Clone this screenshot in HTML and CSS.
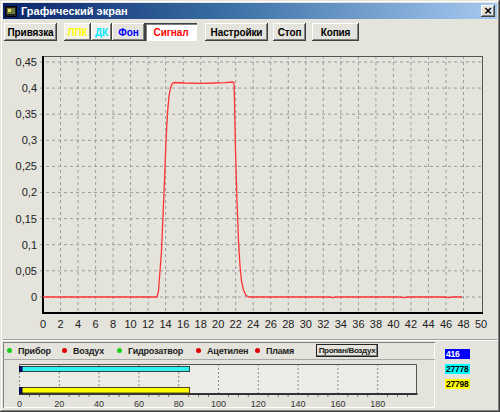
FILE: index.html
```html
<!DOCTYPE html>
<html lang="ru">

<head>
    <meta charset="UTF-8">
    <meta name="viewport" content="width=device-width, initial-scale=1.0">
    <title>Графический экран</title>
    <link rel="stylesheet" href="styles.css">
</head>

<body>
    <div class="window">
        <div class="titlebar">
            <svg class="app-icon" width="12" height="11" viewBox="0 0 12 11">
                <rect x="0.5" y="0.5" width="11" height="10" fill="#222" stroke="#000"/>
                <rect x="2" y="2" width="8" height="6" fill="#6b7a3a"/>
                <rect x="3" y="3" width="3" height="3" fill="#e8e060"/>
            </svg>
            <span class="title">Графический экран</span>
            <span class="close">&#215;</span>
        </div>

        <div class="toolbar">
            <button class="btn btn-bind">Привязка</button>
            <div class="tabs">
                <button class="tab tab-lpk">ЛПК</button>
                <button class="tab tab-dk">ДК</button>
                <button class="tab tab-fon">Фон</button>
                <button class="tab tab-signal active">Сигнал</button>
            </div>
            <button class="btn btn-settings">Настройки</button>
            <button class="btn btn-stop">Стоп</button>
            <button class="btn btn-copy">Копия</button>
        </div>

        <svg class="chart" width="494" height="298" viewBox="3 40 494 298">
            <g class="grid-h">
                <line x1="40" y1="61" x2="482" y2="61"/>
                <line x1="40" y1="87.1" x2="482" y2="87.1"/>
                <line x1="40" y1="113.2" x2="482" y2="113.2"/>
                <line x1="40" y1="139.3" x2="482" y2="139.3"/>
                <line x1="40" y1="165.4" x2="482" y2="165.4"/>
                <line x1="40" y1="191.5" x2="482" y2="191.5"/>
                <line x1="40" y1="217.6" x2="482" y2="217.6"/>
                <line x1="40" y1="243.7" x2="482" y2="243.7"/>
                <line x1="40" y1="269.8" x2="482" y2="269.8"/>
                <line x1="40" y1="296" x2="482" y2="296"/>
            </g>
            <g class="grid-v">
                <line x1="60.5" y1="55" x2="60.5" y2="312"/>
                <line x1="78" y1="55" x2="78" y2="312"/>
                <line x1="95.6" y1="55" x2="95.6" y2="312"/>
                <line x1="113.1" y1="55" x2="113.1" y2="312"/>
                <line x1="130.6" y1="55" x2="130.6" y2="312"/>
                <line x1="148.1" y1="55" x2="148.1" y2="312"/>
                <line x1="165.6" y1="55" x2="165.6" y2="312"/>
                <line x1="183.2" y1="55" x2="183.2" y2="312"/>
                <line x1="200.7" y1="55" x2="200.7" y2="312"/>
                <line x1="218.2" y1="55" x2="218.2" y2="312"/>
                <line x1="235.7" y1="55" x2="235.7" y2="312"/>
                <line x1="253.2" y1="55" x2="253.2" y2="312"/>
                <line x1="270.8" y1="55" x2="270.8" y2="312"/>
                <line x1="288.3" y1="55" x2="288.3" y2="312"/>
                <line x1="305.8" y1="55" x2="305.8" y2="312"/>
                <line x1="323.3" y1="55" x2="323.3" y2="312"/>
                <line x1="340.8" y1="55" x2="340.8" y2="312"/>
                <line x1="358.4" y1="55" x2="358.4" y2="312"/>
                <line x1="375.9" y1="55" x2="375.9" y2="312"/>
                <line x1="393.4" y1="55" x2="393.4" y2="312"/>
                <line x1="410.9" y1="55" x2="410.9" y2="312"/>
                <line x1="428.4" y1="55" x2="428.4" y2="312"/>
                <line x1="446" y1="55" x2="446" y2="312"/>
                <line x1="463.5" y1="55" x2="463.5" y2="312"/>
            </g>

            <line class="frame" x1="43" y1="55.5" x2="482" y2="55.5"/>
            <line class="frame" x1="482.5" y1="55" x2="482.5" y2="312"/>
            <line class="axis" x1="43" y1="55" x2="43" y2="313"/>
            <line class="axis" x1="42" y1="312" x2="483" y2="312"/>

            <polyline class="signal" points="43,296 157,296 158.5,290 160,270 161.5,250 163,215 164.5,180 166,140 167.5,112 169,95 170.5,87 172,83 174,81.5 185,82 200,82.3 215,82 225,81.6 233,81 234,82 234.5,100 235.5,150 237,200 238.5,240 240,265 241.5,280 243.5,289 246,294.5 249,296 330,296 333,296.6 336,296 400,296 404,296.6 408,296 445,296 449,296.6 452,296 462,296"/>

            <g class="ylabels">
                <text x="37" y="65">0,45</text>
                <text x="37" y="91">0,4</text>
                <text x="37" y="117">0,35</text>
                <text x="37" y="143">0,3</text>
                <text x="37" y="169">0,25</text>
                <text x="37" y="195">0,2</text>
                <text x="37" y="222">0,15</text>
                <text x="37" y="248">0,1</text>
                <text x="37" y="274">0,05</text>
                <text x="37" y="300">0</text>
            </g>
            <g class="xlabels">
                <text x="43" y="327">0</text>
                <text x="60.5" y="327">2</text>
                <text x="78" y="327">4</text>
                <text x="95.6" y="327">6</text>
                <text x="113.1" y="327">8</text>
                <text x="130.6" y="327">10</text>
                <text x="148.1" y="327">12</text>
                <text x="165.6" y="327">14</text>
                <text x="183.2" y="327">16</text>
                <text x="200.7" y="327">18</text>
                <text x="218.2" y="327">20</text>
                <text x="235.7" y="327">22</text>
                <text x="253.2" y="327">24</text>
                <text x="270.8" y="327">26</text>
                <text x="288.3" y="327">28</text>
                <text x="305.8" y="327">30</text>
                <text x="323.3" y="327">32</text>
                <text x="340.8" y="327">34</text>
                <text x="358.4" y="327">36</text>
                <text x="375.9" y="327">38</text>
                <text x="393.4" y="327">40</text>
                <text x="410.9" y="327">42</text>
                <text x="428.4" y="327">44</text>
                <text x="446" y="327">46</text>
                <text x="463.5" y="327">48</text>
                <text x="481" y="327">50</text>
            </g>
        </svg>

        <div class="bottom">
            <div class="status">
                <div class="legend">
                    <span class="item"><i class="dot green"></i>Прибор</span>
                    <span class="item"><i class="dot red"></i>Воздух</span>
                    <span class="item"><i class="dot green"></i>Гидрозатвор</span>
                    <span class="item"><i class="dot red"></i>Ацетилен</span>
                    <span class="item"><i class="dot red"></i>Пламя</span>
                    <span class="mode">Пропан/Воздух</span>
                </div>
                <svg class="bars" width="430" height="50" viewBox="4 359 430 50">
                    <rect class="bars-bg" x="20.5" y="363.5" width="397" height="29.5"/>
                    <g class="bars-grid">
                        <line x1="20.5" y1="363" x2="20.5" y2="393"/>
                        <line x1="60.3" y1="363" x2="60.3" y2="393"/>
                        <line x1="100.1" y1="363" x2="100.1" y2="393"/>
                        <line x1="139.9" y1="363" x2="139.9" y2="393"/>
                        <line x1="179.7" y1="363" x2="179.7" y2="393"/>
                        <line x1="219.5" y1="363" x2="219.5" y2="393"/>
                        <line x1="259.3" y1="363" x2="259.3" y2="393"/>
                        <line x1="299.1" y1="363" x2="299.1" y2="393"/>
                        <line x1="338.9" y1="363" x2="338.9" y2="393"/>
                        <line x1="378.7" y1="363" x2="378.7" y2="393"/>
                    </g>
                    <polyline class="bars-frame" points="20.5,363.5 417.5,363.5 417.5,393"/>
                    <line class="bars-axis" x1="20" y1="393" x2="418.5" y2="393"/>
                    <g class="bars-ticks">
                        <line x1="30.4" y1="394" x2="30.4" y2="396"/>
                        <line x1="40.4" y1="394" x2="40.4" y2="396"/>
                        <line x1="50.3" y1="394" x2="50.3" y2="396"/>
                        <line x1="70.2" y1="394" x2="70.2" y2="396"/>
                        <line x1="80.2" y1="394" x2="80.2" y2="396"/>
                        <line x1="90.1" y1="394" x2="90.1" y2="396"/>
                        <line x1="110" y1="394" x2="110" y2="396"/>
                        <line x1="120" y1="394" x2="120" y2="396"/>
                        <line x1="129.9" y1="394" x2="129.9" y2="396"/>
                        <line x1="149.8" y1="394" x2="149.8" y2="396"/>
                        <line x1="159.8" y1="394" x2="159.8" y2="396"/>
                        <line x1="169.7" y1="394" x2="169.7" y2="396"/>
                        <line x1="189.6" y1="394" x2="189.6" y2="396"/>
                        <line x1="199.6" y1="394" x2="199.6" y2="396"/>
                        <line x1="209.5" y1="394" x2="209.5" y2="396"/>
                        <line x1="229.4" y1="394" x2="229.4" y2="396"/>
                        <line x1="239.4" y1="394" x2="239.4" y2="396"/>
                        <line x1="249.3" y1="394" x2="249.3" y2="396"/>
                        <line x1="269.2" y1="394" x2="269.2" y2="396"/>
                        <line x1="279.2" y1="394" x2="279.2" y2="396"/>
                        <line x1="289.1" y1="394" x2="289.1" y2="396"/>
                        <line x1="309" y1="394" x2="309" y2="396"/>
                        <line x1="319" y1="394" x2="319" y2="396"/>
                        <line x1="328.9" y1="394" x2="328.9" y2="396"/>
                        <line x1="348.8" y1="394" x2="348.8" y2="396"/>
                        <line x1="358.8" y1="394" x2="358.8" y2="396"/>
                        <line x1="368.7" y1="394" x2="368.7" y2="396"/>
                        <line x1="388.6" y1="394" x2="388.6" y2="396"/>
                        <line x1="398.6" y1="394" x2="398.6" y2="396"/>
                        <line x1="408.5" y1="394" x2="408.5" y2="396"/>
                    </g>
                    <rect class="bar-cyan" x="21.5" y="365.5" width="169" height="5"/>
                    <rect class="bar-start" x="20.5" y="365.5" width="2.5" height="5"/>
                    <rect class="bar-yellow" x="21.5" y="386.5" width="169" height="5.5"/>
                    <rect class="bar-start" x="20.5" y="386.5" width="2.5" height="5.5"/>
                    <g class="bars-labels">
                        <text x="20.5" y="406">0</text>
                        <text x="60.3" y="406">20</text>
                        <text x="100.1" y="406">40</text>
                        <text x="139.9" y="406">60</text>
                        <text x="179.7" y="406">80</text>
                        <text x="219.5" y="406">100</text>
                        <text x="259.3" y="406">120</text>
                        <text x="299.1" y="406">140</text>
                        <text x="338.9" y="406">160</text>
                        <text x="378.7" y="406">180</text>
                    </g>
                </svg>
            </div>
            <div class="values">
                <span class="value blue">416</span>
                <span class="value cyan">27778</span>
                <span class="value yellow">27798</span>
            </div>
        </div>
    </div>
</body>

</html>
```

FILE: styles.css
```css
body {
    margin: 0;
    font-family: 'Liberation Sans', Arial, sans-serif;
    background-color: #e4e3dc;
}

.window {
    width: 500px;
    height: 412px;
    box-sizing: border-box;
    padding: 3px;
    background-color: #e4e3dc;
    box-shadow: inset -1px -1px #404040, inset 1px 1px #e4e3dc, inset -2px -2px #808080, inset 2px 2px #ffffff;
    overflow: hidden;
}

/* title bar */
.titlebar {
    height: 16px;
    display: flex;
    align-items: center;
    padding: 0 2px;
    background: linear-gradient(to right, #0a246a, #3a6ea5 45%, #a6caf0);
}

.app-icon {
    margin-right: 4px;
}

.title {
    flex: 1;
    color: #fff;
    font-weight: bold;
    font-size: 11px;
}

.close {
    width: 14px;
    height: 12px;
    line-height: 11px;
    text-align: center;
    font-size: 13px;
    font-weight: bold;
    color: #000;
    background-color: #e4e3dc;
    box-shadow: inset -1px -1px #404040, inset 1px 1px #fff, inset -2px -2px #808080;
}

/* toolbar */
.toolbar {
    display: flex;
    align-items: center;
    height: 18px;
    margin-top: 4px;
    padding-left: 1px;
}

.btn,
.tab {
    height: 18px;
    padding: 0;
    border: none;
    font-family: 'Liberation Sans', Arial, sans-serif;
    font-weight: bold;
    font-size: 10px;
    letter-spacing: -0.1px;
    white-space: nowrap;
    color: #000;
    background-color: #e4e3dc;
    box-shadow: inset -1px -1px #404040, inset 1px 1px #fff, inset -2px -2px #808080;
}

.btn-bind {
    width: 53px;
}

.tabs {
    display: flex;
    margin-left: 7px;
}

.tab-lpk {
    width: 27px;
    color: #ffff00;
    background-color: #f2f1ec;
}

.tab-dk {
    width: 21px;
    color: #00e8ff;
    background-color: #f2f1ec;
}

.tab-fon {
    width: 33px;
    color: #0000ff;
}

.tab.active {
    width: 52px;
    color: #ff0000;
    background-color: #fff;
    box-shadow: inset 1px 1px #404040, inset 2px 2px #808080, inset -1px -1px #fff;
}

.btn-settings {
    width: 63px;
    margin-left: 8px;
}

.btn-stop {
    width: 33px;
    margin-left: 5px;
}

.btn-copy {
    width: 47px;
    margin-left: 6px;
}

/* main chart */
.chart {
    display: block;
}

.grid-h line,
.grid-v line {
    stroke: #9c9c9c;
    stroke-width: 1;
    stroke-dasharray: 3 3;
}

.frame {
    stroke: #555;
    stroke-width: 1;
}

.axis {
    stroke: #000;
    stroke-width: 2;
}

.signal {
    fill: none;
    stroke: #ff3333;
    stroke-width: 1.3;
}

.ylabels text {
    font-size: 11px;
    fill: #222;
    text-anchor: end;
}

.xlabels text {
    font-size: 11px;
    fill: #222;
    text-anchor: middle;
}

/* bottom panel */
.bottom {
    display: flex;
    height: 69px;
    border-top: 1px solid #a0a0a0;
    box-shadow: 0 1px 0 #fff inset;
    padding-top: 2px;
    box-sizing: border-box;
}

.status {
    width: 432px;
    box-sizing: border-box;
    box-shadow: inset 1px 1px #808080, inset -1px -1px #fff;
}

.legend {
    display: grid;
    grid-template-columns: 55px 55px 79px 59px 61px auto;
    align-items: center;
    height: 17px;
    padding-left: 4px;
    font-size: 9px;
    font-weight: bold;
    letter-spacing: -0.2px;
    white-space: nowrap;
    color: #222;
    border-bottom: 1px solid #a8a8a8;
}

.item {
    display: flex;
    align-items: center;
}

.dot {
    width: 5px;
    height: 5px;
    border-radius: 50%;
    margin-right: 6px;
}

.dot.green {
    background-color: #18d018;
}

.dot.red {
    background-color: #e00000;
}

.mode {
    width: 60px;
    height: 11px;
    line-height: 11px;
    text-align: center;
    font-size: 8px;
    letter-spacing: -0.3px;
    overflow: hidden;
    border: 1px solid #222;
    box-shadow: inset -1px -1px #808080;
}

.bars {
    display: block;
}

.bars-bg {
    fill: #ecebe6;
}

.bars-grid line {
    stroke: #8c8c8c;
    stroke-dasharray: 2 2;
}

.bars-frame {
    fill: none;
    stroke: #555;
}

.bars-axis {
    stroke: #333;
    stroke-width: 2;
}

.bars-ticks line {
    stroke: #777;
}

.bar-cyan {
    fill: #33f0f0;
    stroke: #2a4a4a;
}

.bar-yellow {
    fill: #ffff00;
    stroke: #4a4a20;
}

.bar-start {
    fill: #0a0a80;
    stroke: #000040;
}

.bars-labels text {
    font-size: 9px;
    fill: #333;
    text-anchor: middle;
}

.values {
    flex: 1;
    display: flex;
    flex-direction: column;
    gap: 5px;
    padding: 7px 0 0 10px;
}

.value {
    width: 24px;
    height: 10px;
    line-height: 10px;
    font-size: 8.5px;
    font-weight: bold;
    padding-left: 1px;
    letter-spacing: -0.2px;
}

.value.blue {
    background-color: #0000ff;
    color: #fff;
}

.value.cyan {
    background-color: #00ffff;
    color: #000;
}

.value.yellow {
    background-color: #ffff00;
    color: #000;
}
```
